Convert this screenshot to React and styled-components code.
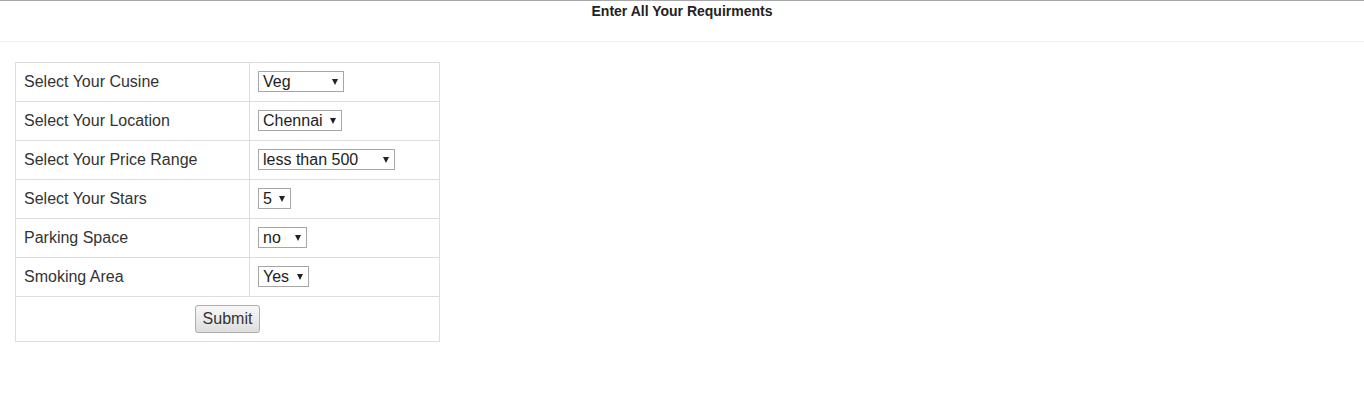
import React from "react";
import styled, { createGlobalStyle } from "styled-components";

const Global = createGlobalStyle`
  html, body { margin: 0; padding: 0; background: #fff; }
  body { font-family: "Liberation Sans", Arial, sans-serif; color: #333; }
`;

const Header = styled.header`
  border-top: 1px solid #a8a8a8;
  border-bottom: 1px solid #eeeeee;
  height: 42px;
  box-sizing: border-box;
  padding-top: 2px;
  text-align: center;
  font-weight: bold;
  font-size: 14px;
  line-height: 17px;
  color: #222;
`;

const Main = styled.main`
  padding: 20px 15px;
`;

const Table = styled.table`
  border-collapse: collapse;
  width: 425px;
  border: 1px solid #ddd;
  font-size: 16px;
  line-height: 22px;
`;

const Cell = styled.td`
  border: 1px solid #ddd;
  padding: 8px;
  vertical-align: top;
  height: ${(p) => (p.$tall ? "28px" : "22px")};
  width: ${(p) => p.$w || "auto"};
  text-align: ${(p) => (p.$center ? "center" : "left")};
  box-sizing: content-box;
`;

const Dropdown = styled.span`
  display: inline-flex;
  align-items: center;
  justify-content: space-between;
  box-sizing: border-box;
  width: ${(p) => p.$w}px;
  height: 21px;
  border: 1px solid #a6a6a6;
  padding: 0 5px 0 4px;
  font-size: 16px;
  line-height: 19px;
  color: #222;
  background: #fff;
`;

const Arrow = styled.span`
  width: 0;
  height: 0;
  border-left: 3.5px solid transparent;
  border-right: 3.5px solid transparent;
  border-top: 6px solid #222;
  margin-left: 4px;
`;

const Button = styled.button`
  font-family: "Liberation Sans", Arial, sans-serif;
  font-size: 16px;
  color: #333;
  height: 28px;
  width: 65px;
  padding: 0;
  border: 1px solid #adadad;
  border-radius: 3px;
  background: linear-gradient(#f8f8f8, #dddddd);
  vertical-align: top;
`;

const rows = [
  ["Select Your Cusine", "Veg", 86],
  ["Select Your Location", "Chennai", 84],
  ["Select Your Price Range", "less than 500", 137],
  ["Select Your Stars", "5", 33],
  ["Parking Space", "no", 49],
  ["Smoking Area", "Yes", 51],
];

export default function App() {
  return (
    <>
      <Global />
      <Header>Enter All Your Requirments</Header>
      <Main>
        <Table>
          <tbody>
            {rows.map(([label, value, w]) => (
              <tr key={label}>
                <Cell $w="217px">{label}</Cell>
                <Cell>
                  <Dropdown $w={w}>
                    <span>{value}</span>
                    <Arrow />
                  </Dropdown>
                </Cell>
              </tr>
            ))}
            <tr>
              <Cell colSpan={2} $center $tall>
                <Button>Submit</Button>
              </Cell>
            </tr>
          </tbody>
        </Table>
      </Main>
    </>
  );
}
